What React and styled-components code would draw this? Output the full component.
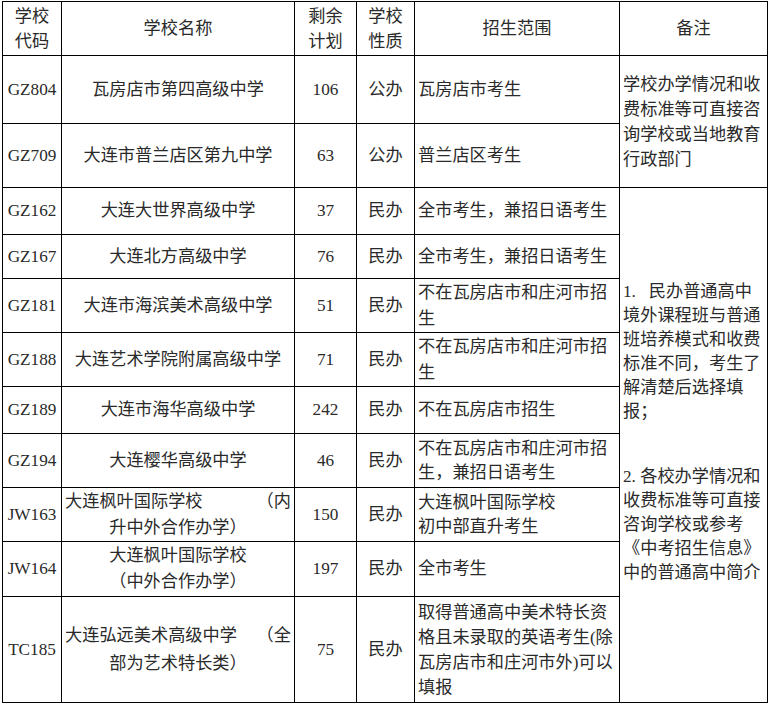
import styled, { createGlobalStyle } from "styled-components";

const GlobalStyle = createGlobalStyle`
  body {
    margin: 0;
    background: #fff;
  }
`;

const FONT = `"Liberation Serif", "Noto Sans CJK SC", serif`;
const LATIN = `"Liberation Serif", "Times New Roman", "DejaVu Serif", serif`;

// 列宽（像素）
const cols = [59, 233, 62, 58, 205, 148];

const rows = [
  { code: "GZ804", name: ["瓦房店市第四高级中学"], plan: 106, type: "公办", scope: ["瓦房店市考生"], h: 68 },
  { code: "GZ709", name: ["大连市普兰店区第九中学"], plan: 63, type: "公办", scope: ["普兰店区考生"], h: 64 },
  { code: "GZ162", name: ["大连大世界高级中学"], plan: 37, type: "民办", scope: ["全市考生，兼招日语考生"], h: 47 },
  { code: "GZ167", name: ["大连北方高级中学"], plan: 76, type: "民办", scope: ["全市考生，兼招日语考生"], h: 44 },
  { code: "GZ181", name: ["大连市海滨美术高级中学"], plan: 51, type: "民办", scope: ["不在瓦房店市和庄河市招", "生"], slh: 26, h: 54 },
  { code: "GZ188", name: ["大连艺术学院附属高级中学"], plan: 71, type: "民办", scope: ["不在瓦房店市和庄河市招", "生"], slh: 26, h: 54 },
  { code: "GZ189", name: ["大连市海华高级中学"], plan: 242, type: "民办", scope: ["不在瓦房店市招生"], h: 47 },
  { code: "GZ194", name: ["大连樱华高级中学"], plan: 46, type: "民办", scope: ["不在瓦房店市和庄河市招", "生，兼招日语考生"], h: 54 },
  {
    code: "JW163",
    split: ["大连枫叶国际学校", "（内"],
    name: ["升中外合作办学）"],
    nlh: 26,
    plan: 150,
    type: "民办",
    scope: ["大连枫叶国际学校", "初中部直升考生"],
    h: 54,
  },
  { code: "JW164", name: ["大连枫叶国际学校", "（中外合作办学）"], nlh: 26, plan: 197, type: "民办", scope: ["全市考生"], h: 55 },
  {
    code: "TC185",
    split: ["大连弘远美术高级中学", "（全"],
    name: ["部为艺术特长类）"],
    nlh: 28,
    plan: 75,
    type: "民办",
    scope: ["取得普通高中美术特长资", "格且未录取的英语考生(除", "瓦房店市和庄河市外)可以", "填报"],
    slh: 25,
    h: 106,
  },
];

const note1 = ["学校办学情况和收", "费标准等可直接咨", "询学校或当地教育", "行政部门"];
const note2a = ["1.\u00a0\u00a0\u00a0民办普通高中", "境外课程班与普通", "班培养模式和收费", "标准不同，考生了", "解清楚后选择填", "报；"];
const note2b = ["2. 各校办学情况和", "收费标准等可直接", "咨询学校或参考", "《中考招生信息》", "中的普通高中简介"];

export default function App() {
  return (
    <Page>
      <GlobalStyle />
      <Table>
        <colgroup>
          {cols.map((w, i) => (
            <Col key={i} $w={w} />
          ))}
        </colgroup>
        <thead>
          <Row $h={54}>
            <HeadCell>
              <Line>学校</Line>
              <Line>代码</Line>
            </HeadCell>
            <HeadCell>学校名称</HeadCell>
            <HeadCell>
              <Line>剩余</Line>
              <Line>计划</Line>
            </HeadCell>
            <HeadCell>
              <Line>学校</Line>
              <Line>性质</Line>
            </HeadCell>
            <HeadCell>招生范围</HeadCell>
            <HeadCell>备注</HeadCell>
          </Row>
        </thead>
        <tbody>
          {rows.map((r, i) => (
            <Row key={r.code} $h={r.h}>
              <Cell $latin>{r.code}</Cell>
              <Cell $lh={r.nlh || 26}>
                {r.split && (
                  <SplitLine>
                    <span>{r.split[0]}</span>
                    <span>{r.split[1]}</span>
                  </SplitLine>
                )}
                {r.name.map((t) => (
                  <Line key={t}>{t}</Line>
                ))}
              </Cell>
              <Cell $latin>{r.plan}</Cell>
              <Cell>{r.type}</Cell>
              <Cell $align="left" $lh={r.slh || 24}>
                {r.scope.map((t) => (
                  <Line key={t}>{t}</Line>
                ))}
              </Cell>
              {i === 0 && (
                <Cell rowSpan={2} $align="left" $lh={25}>
                  {note1.map((t) => (
                    <Line key={t}>{t}</Line>
                  ))}
                </Cell>
              )}
              {i === 2 && (
                <Cell rowSpan={9} $align="left" $lh={24} $pb={26}>
                  {note2a.map((t) => (
                    <Line key={t}>{t}</Line>
                  ))}
                  <Gap />
                  {note2b.map((t) => (
                    <Line key={t}>{t}</Line>
                  ))}
                </Cell>
              )}
            </Row>
          ))}
        </tbody>
      </Table>
    </Page>
  );
}

const Page = styled.div`
  padding: 1px 0 0 2px;
  font-family: ${FONT};
  color: #2a2a2a;
`;

const Table = styled.table`
  border-collapse: collapse;
  table-layout: fixed;
  width: 766px;
  font-family: ${FONT};
  font-size: 17.2px;
  line-height: 26px;
  color: #2a2a2a;
`;

const Col = styled.col`
  width: ${(p) => p.$w}px;
`;

const Row = styled.tr`
  height: ${(p) => p.$h}px;
`;

const Cell = styled.td`
  border: 1px solid #000;
  padding: 0 3px ${(p) => p.$pb || 0}px;
  text-align: ${(p) => p.$align || "center"};
  vertical-align: middle;
  font-family: ${(p) => (p.$latin ? LATIN : FONT)};
  line-height: ${(p) => (p.$lh ? `${p.$lh}px` : "26px")};
  white-space: nowrap;
  overflow: hidden;
  font-weight: 400;
`;

const HeadCell = styled.th`
  border: 1px solid #000;
  padding: 0 3px;
  text-align: center;
  vertical-align: middle;
  font-family: ${FONT};
  line-height: 25px;
  font-weight: 400;
  white-space: nowrap;
`;

const Line = styled.div`
  white-space: nowrap;
`;

const SplitLine = styled.div`
  display: flex;
  justify-content: space-between;
  white-space: nowrap;
`;

const Gap = styled.div`
  height: 41px;
`;
